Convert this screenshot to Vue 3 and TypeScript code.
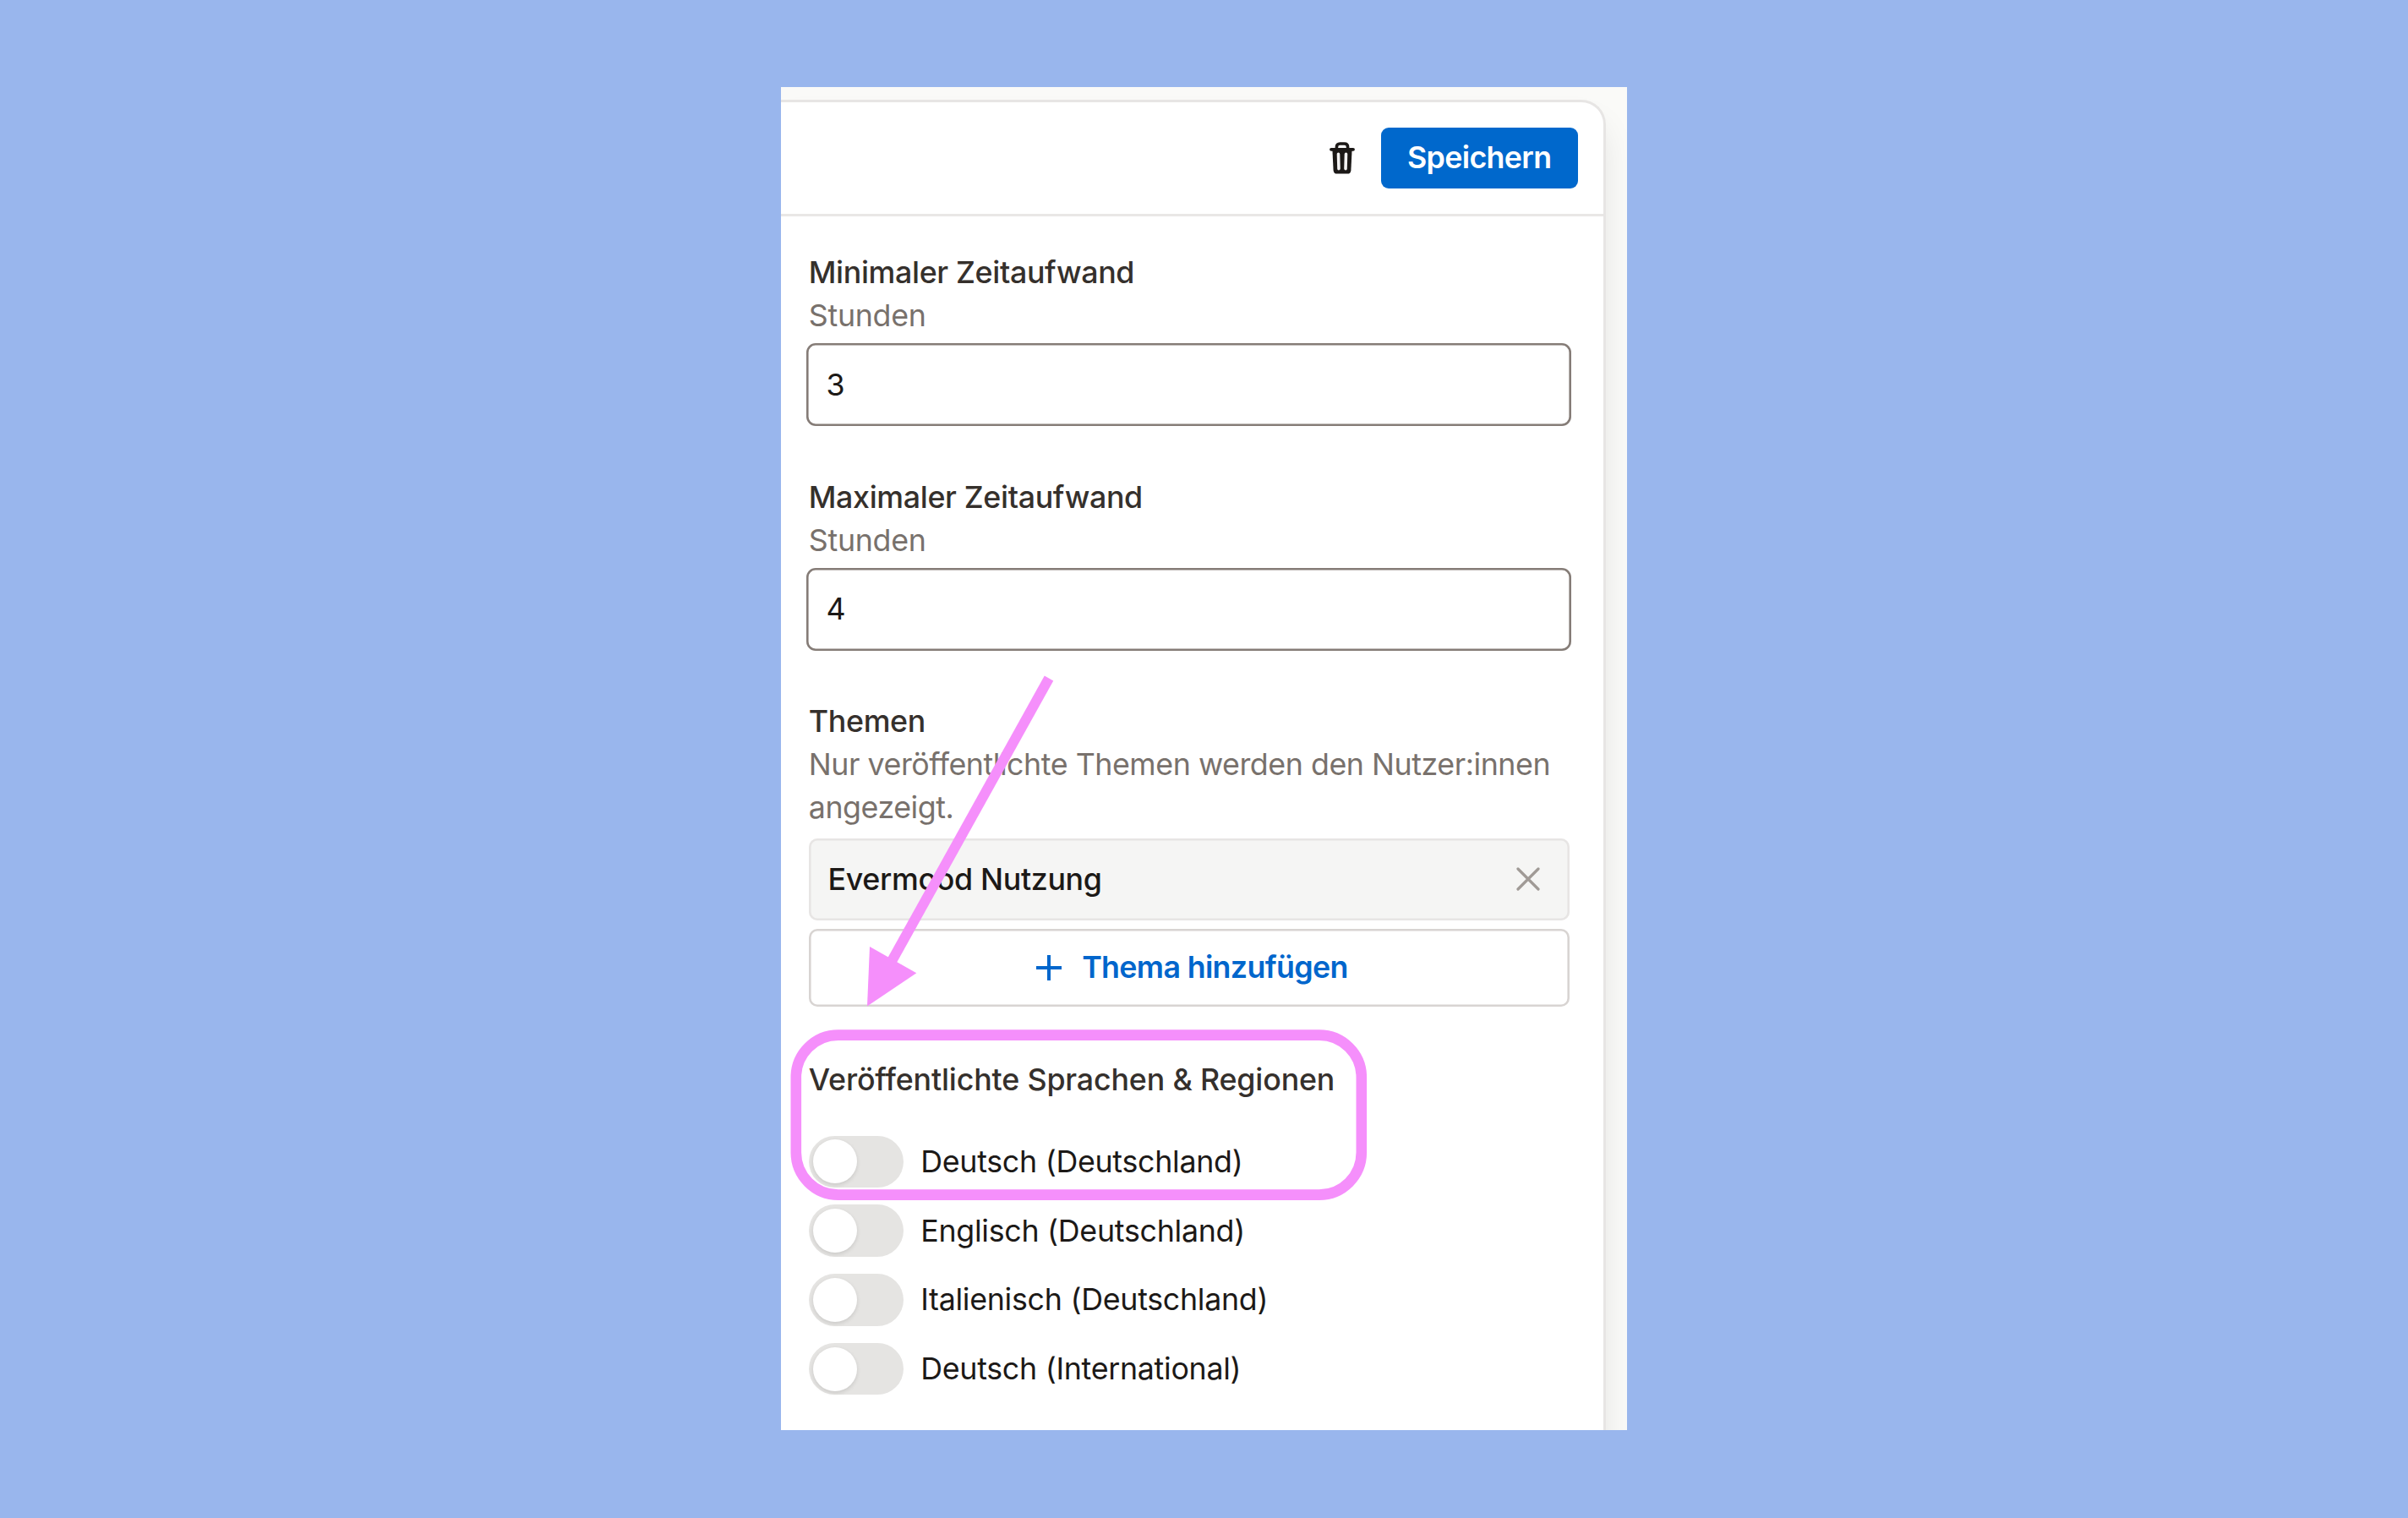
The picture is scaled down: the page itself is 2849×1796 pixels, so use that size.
<script setup lang="ts">
import { reactive } from 'vue'

interface Duration {
  label: string
  unit: string
  value: string
}

const durations = reactive<Duration[]>([
  { label: 'Minimaler Zeitaufwand', unit: 'Stunden', value: '3' },
  { label: 'Maximaler Zeitaufwand', unit: 'Stunden', value: '4' },
])

const locales = reactive([
  { name: 'Deutsch (Deutschland)', published: false },
  { name: 'Englisch (Deutschland)', published: false },
  { name: 'Italienisch (Deutschland)', published: false },
  { name: 'Deutsch (International)', published: false },
])
</script>

<template>
  <main class="stage">
    <section class="shot">
      <div class="card">
        <header class="toolbar">
          <svg class="trash" viewBox="0 0 30 38" fill="none" stroke="#1c1917">
            <path d="M8.4 8.2V6Q8.4 2 12.4 2H17.6Q21.6 2 21.6 6V8.2" stroke-width="3.6" />
            <path d="M2 8.8H28" stroke-width="3.8" stroke-linecap="round" />
            <path d="M3.4 9H26.6L25.4 33.4Q25.1 37.6 21 37.6H9Q4.9 37.6 4.6 33.4Z" fill="#1c1917" stroke="none" />
            <path d="M10.5 14.2L11 31.6M19.5 14.2L19 31.6" stroke="#f3f2f2" stroke-width="3.6" stroke-linecap="round" />
          </svg>
          <button class="save" type="button">Speichern</button>
        </header>

        <div class="body">
          <div v-for="d in durations" :key="d.label" class="field">
            <div class="label">{{ d.label }}</div>
            <div class="hint">{{ d.unit }}</div>
            <div class="input">{{ d.value }}</div>
          </div>

          <div class="topics">
            <div class="label">Themen</div>
            <div class="hint long">Nur veröffentlichte Themen werden den Nutzer:innen<br />angezeigt.</div>
            <div class="chip">
              <span>Evermood Nutzung</span>
              <svg class="remove" viewBox="0 0 28 28" fill="none" stroke="#a09a96" stroke-width="3.2" stroke-linecap="round">
                <path d="M2 2L26 26M26 2L2 26" />
              </svg>
            </div>
            <button class="add" type="button">
              <svg class="plus" viewBox="0 0 44 44" fill="none" stroke="#0066cc" stroke-width="4">
                <path d="M22 7V37M7 22H37" />
              </svg>
              <span>Thema hinzufügen</span>
            </button>
          </div>

          <div class="locales">
            <div class="label wide">Veröffentlichte Sprachen &amp; Regionen</div>
            <div class="list">
              <label v-for="l in locales" :key="l.name" class="row">
                <span class="switch" :class="{ on: l.published }"><span class="knob"></span></span>
                <span class="name">{{ l.name }}</span>
              </label>
            </div>
          </div>
        </div>
      </div>

      <svg class="marks" viewBox="924 103 1001 1589" fill="none">
        <rect x="941.8" y="1224.6" width="669" height="189" rx="50" stroke="#f58ffb" stroke-width="12.6" />
        <path d="M1241 802.5L1054 1139" stroke="#f58ffb" stroke-width="12" />
        <path d="M1029 1120L1084.3 1151.2L1026 1190.5Z" fill="#f58ffb" />
      </svg>
    </section>
  </main>
</template>

<style>
body {
  background: #99b6ed;
}
</style>

<style scoped>
.stage {
  box-sizing: border-box;
  width: 2849px;
  height: 1796px;
  padding: 103px 924px 0 924px;
  background: #99b6ed;
  overflow: hidden;
  font-family: Inter, sans-serif;
  font-size: 35.78px;
  line-height: 51.1px;
  letter-spacing: -0.28px;
  color: #1c1917;
}

.shot {
  position: relative;
  width: 1001px;
  height: 1589px;
  overflow: hidden;
  background: #fafaf8;
}

.card {
  box-sizing: border-box;
  width: 976px;
  height: 1700px;
  margin-top: 15px;
  border: solid #e7e5e4;
  border-width: 3px 3px 0 0;
  border-top-right-radius: 29px;
  background: #fff;
  box-shadow: 0 26px 40px -4px rgba(0, 0, 0, 0.1);
}

.shot::before {
  content: '';
  display: table;
}

.toolbar {
  box-sizing: border-box;
  height: 135px;
  padding: 0 30.3px 0 0;
  border-bottom: 3px solid #e9e7e6;
  display: flex;
  align-items: center;
  justify-content: flex-end;
  gap: 30.3px;
}

.trash {
  width: 30px;
  height: 38px;
}

button {
  font: inherit;
  letter-spacing: inherit;
  margin: 0;
  border: 0;
  padding: 0;
}

.save {
  width: 233px;
  height: 72.3px;
  border-radius: 9px;
  background: #0068cc;
  color: #fff;
  font-weight: 600;
  letter-spacing: -0.65px;
}

.body {
  padding: 41.1px 40.5px 0 32.8px;
}

.field {
  margin-bottom: 58.4px;
}

.label {
  color: #35302c;
  font-weight: 500;
  letter-spacing: -0.34px;
}

.label.wide {
  letter-spacing: -0.16px;
}

.hint {
  color: #78716c;
}

.hint.long {
  letter-spacing: -0.46px;
  white-space: nowrap;
}

.input {
  box-sizing: border-box;
  height: 98.3px;
  margin: 6.7px -2.6px 0;
  padding: 23.6px 23.2px;
  border-radius: 11px;
  box-shadow: inset 0 0 0 2.6px #857c77;
}

.chip {
  box-sizing: border-box;
  height: 97px;
  margin-top: 10.2px;
  padding: 0 34.8px 0 22.8px;
  border-radius: 10px;
  background: #f5f5f4;
  box-shadow: inset 0 0 0 2.6px #e7e5e4;
  display: flex;
  align-items: center;
  justify-content: space-between;
  font-weight: 500;
  letter-spacing: -0.33px;
}

.remove {
  width: 28px;
  height: 28px;
}

.add {
  width: 100%;
  height: 92.3px;
  margin-top: 10px;
  border-radius: 10px;
  background: #fff;
  box-shadow: inset 0 0 0 2.6px #d8d4d2;
  display: flex;
  align-items: center;
  justify-content: center;
  gap: 17.5px;
  color: #0066cc;
  font-weight: 600;
  letter-spacing: -0.65px;
}

.plus {
  width: 44px;
  height: 44px;
}

.locales {
  margin-top: 61px;
}

.list {
  margin-top: 40.6px;
  display: flex;
  flex-direction: column;
  gap: 20.2px;
}

.row {
  display: flex;
  align-items: center;
  gap: 20.4px;
  height: 61.5px;
}

.switch {
  box-sizing: border-box;
  width: 112px;
  height: 61.5px;
  padding: 4.8px 5px;
  border-radius: 31px;
  background: #e5e4e2;
  display: flex;
}

.switch.on {
  justify-content: flex-end;
  background: #0068cc;
}

.knob {
  width: 52px;
  height: 52px;
  border-radius: 50%;
  background: #fff;
  box-shadow: 0 2px 5px rgba(0, 0, 0, 0.12);
}

.marks {
  position: absolute;
  inset: 0;
  width: 1001px;
  height: 1589px;
}
</style>
